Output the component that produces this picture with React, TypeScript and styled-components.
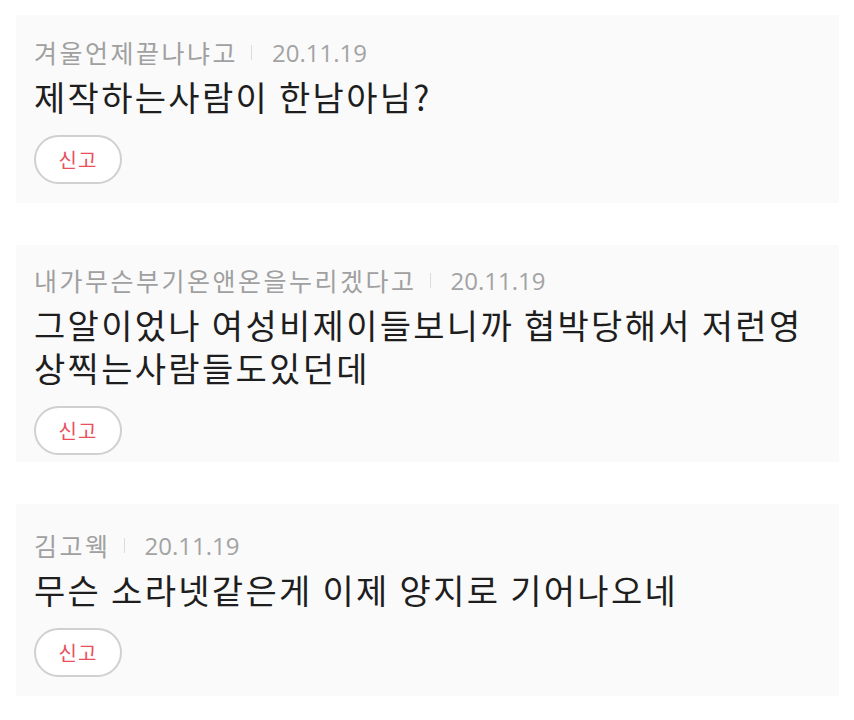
import React from "react";
import styled, { createGlobalStyle } from "styled-components";

const Global = createGlobalStyle`
  html, body {
    margin: 0;
    padding: 0;
    background: #ffffff;
  }
  body {
    font-family: "Noto Sans CJK KR", "Noto Sans", sans-serif;
  }
`;

const List = styled.div`
  display: flex;
  flex-direction: column;
  gap: 42px;
  padding: 15px 0 0 16px;
  width: 823px;
`;

const Card = styled.div<{ $pt: number; $pb: number }>`
  background: #fafafa;
  padding: ${(p) => p.$pt}px 18px ${(p) => p.$pb}px 18px;
  display: flex;
  flex-direction: column;
  align-items: flex-start;
`;

const Meta = styled.div`
  display: flex;
  align-items: center;
  height: 30px;
  font-size: 25px;
  letter-spacing: 2.5px;
  color: #a0a0a0;
`;

const Sep = styled.span`
  display: inline-block;
  width: 1px;
  height: 15px;
  background: #dcdcdc;
  margin: 0 20px 0 13px;
`;

const DateText = styled.span`
  font-family: "Open Sans", "Noto Sans", sans-serif;
  font-size: 24px;
  color: #a3a3a3;
  letter-spacing: 0;
`;

const Title = styled.div`
  margin-top: 8px;
  font-size: 34px;
  line-height: 43px;
  letter-spacing: 2.3px;
  color: #1e1e1e;
  width: 100%;
`;

const ReportButton = styled.button`
  margin-top: 17px;
  width: 88px;
  height: 49px;
  border: 2px solid #d0d0d0;
  border-radius: 25px;
  background: #ffffff;
  color: #e9505c;
  font-family: "Noto Sans CJK KR", "Noto Sans", sans-serif;
  font-size: 20px;
  letter-spacing: 1px;
  padding: 0;
  display: flex;
  align-items: center;
  justify-content: center;
  box-sizing: border-box;
`;

type Comment = {
  name: string;
  date: string;
  text: string;
  pt: number;
  pb: number;
};

const comments: Comment[] = [
  { name: "겨울언제끝나냐고", date: "20.11.19", text: "제작하는사람이 한남아님?", pt: 22, pb: 19 },
  {
    name: "내가무슨부기온앤온을누리겠다고",
    date: "20.11.19",
    text: "그알이었나 여성비제이들보니까 협박당해서 저런영상찍는사람들도있던데",
    pt: 20,
    pb: 7,
  },
  { name: "김고웩", date: "20.11.19", text: "무슨 소라넷같은게 이제 양지로 기어나오네", pt: 26, pb: 19 },
];

export default function App() {
  return (
    <>
      <Global />
      <List>
        {comments.map((c, i) => (
          <Card key={i} $pt={c.pt} $pb={c.pb}>
            <Meta>
              <span>{c.name}</span>
              <Sep />
              <DateText>{c.date}</DateText>
            </Meta>
            <Title>{c.text}</Title>
            <ReportButton>신고</ReportButton>
          </Card>
        ))}
      </List>
    </>
  );
}
